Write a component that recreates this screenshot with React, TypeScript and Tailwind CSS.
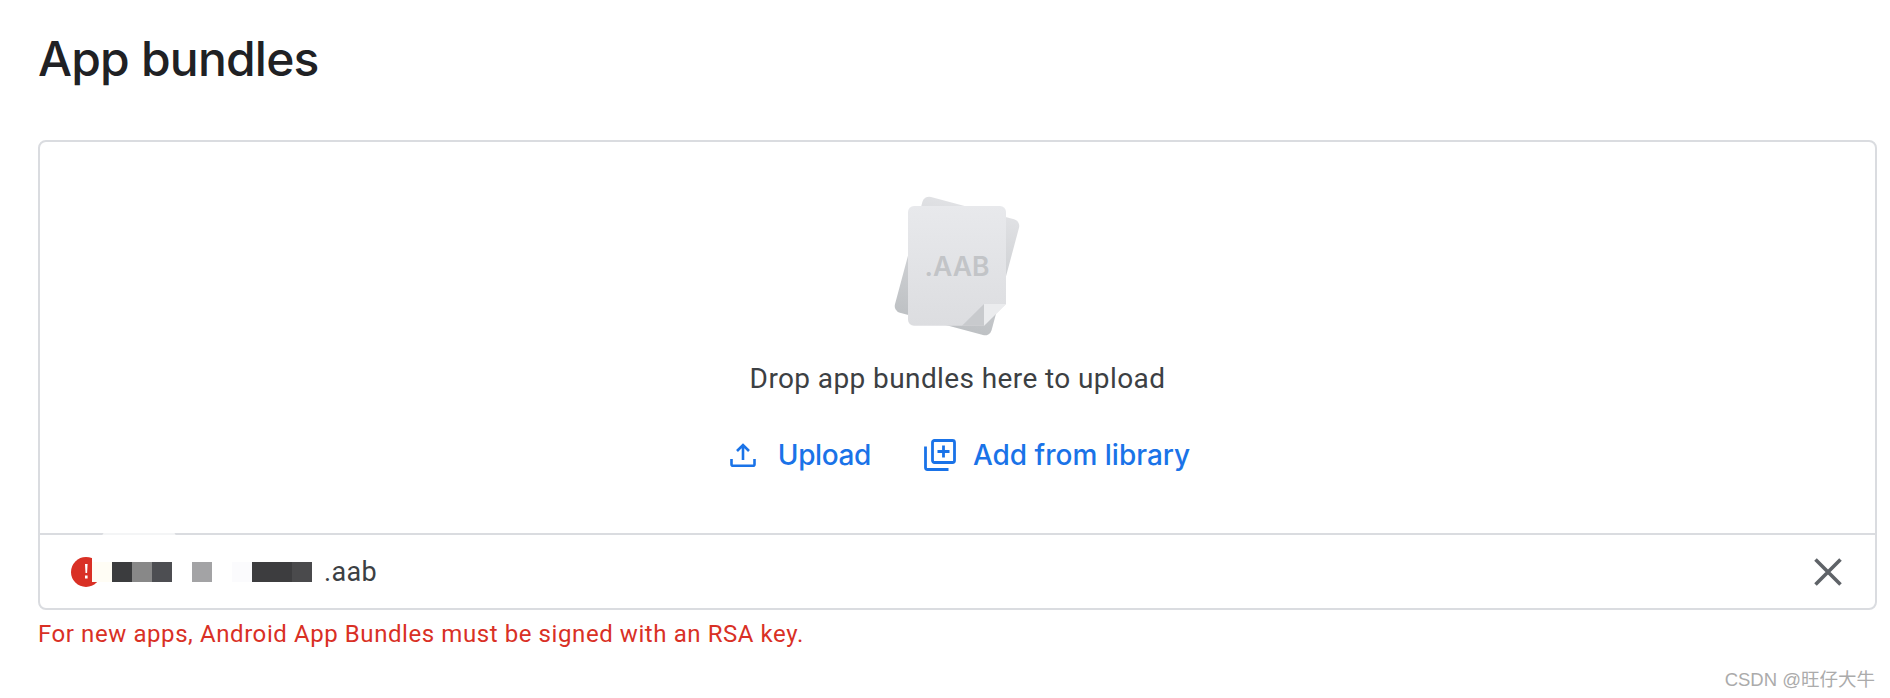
export default function App() {
  return (
    <div className="w-[1890px] h-[698px] bg-white overflow-hidden flex flex-col pl-[38px] pr-[11px] font-['Roboto','Noto_Sans_CJK_SC',sans-serif]">
      <h1 className="mt-[30px] h-[58px] leading-[58px] text-[48px] font-medium tracking-[-0.8px] text-[#202124] font-['Inter',sans-serif]">
        App bundles
      </h1>
      <div className="mt-[52px] w-[1839px] h-[470px] border-2 border-[#dadce0] rounded-[8px] flex flex-col">
        <div className="relative h-[393px] flex flex-col items-center border-b-2 border-[#dadce0]">
          <svg className="mt-[38px]" width="196" height="170" viewBox="0 0 196 170">
            <defs>
              <linearGradient id="back" x1="0" y1="0" x2="0" y2="1">
                <stop offset="0" stopColor="#e0e1e4" />
                <stop offset="1" stopColor="#bec1c4" />
              </linearGradient>
              <linearGradient id="front" x1="0" y1="0" x2="0" y2="1">
                <stop offset="0" stopColor="#e8e9ec" />
                <stop offset="1" stopColor="#dcdde0" />
              </linearGradient>
            </defs>
            <rect x="47" y="26" width="100" height="120" rx="7" fill="url(#back)" transform="rotate(15 97 86)" />
            <path d="M54 26h86a6 6 0 0 1 6 6v92l-22 21.7H54a6 6 0 0 1-6-6V32a6 6 0 0 1 6-6z" fill="url(#front)" />
            <path d="M102 145.7L124 124v21.7z" fill="#c8cacd" />
            <path d="M124 124h22l-22 21.7z" fill="#ebecee" />
            <text x="97" y="96" textAnchor="middle" fontFamily="Inter, sans-serif" fontSize="26.5" fontWeight="600" fill="#c2c4c7">.AAB</text>
          </svg>
          <p className="mt-[12px] h-[34px] leading-[34px] text-[28px] tracking-[0.4px] text-[#3c4043]">
            Drop app bundles here to upload
          </p>
          <div className="mt-[38px] ml-[5px] flex items-center text-[#1a73e8] text-[28px] font-medium font-['Inter',sans-serif]">
            <svg width="26" height="26" viewBox="0 0 26 26" fill="none" stroke="#1a73e8" strokeWidth="2.6">
              <path d="M13 18V3.5M7 9l6-6 6 6M1.5 17v5.2a1.5 1.5 0 0 0 1.5 1.5h20a1.5 1.5 0 0 0 1.5-1.5V17" />
            </svg>
            <span className="ml-[22px] tracking-[-0.4px]">Upload</span>
            <svg className="ml-[53px]" width="32" height="32" viewBox="0 0 32 32" fill="none" stroke="#1a73e8" strokeWidth="2.8">
              <rect x="8.5" y="1.5" width="22" height="22" rx="2" />
              <path d="M19.5 6.5v12M13.5 12.5h12M1.5 7.5v21a2 2 0 0 0 2 2h21" />
            </svg>
            <span className="ml-[17px]">Add from library</span>
          </div>
          <div className="absolute left-[62px] bottom-[-4px] w-[74px] h-[6px] rounded-t-[8px] bg-white/70" />
        </div>
        <div className="flex-1 flex items-center pl-[30px] pr-[32px]">
          <svg width="32" height="32" viewBox="0 0 32 32">
            <circle cx="16" cy="16" r="15" fill="#d93025" />
            <path d="M15 8h2.6l-.5 9h-1.6z M15 19.5h2.6v3H15z" fill="#fff" />
            <path d="M22 0h10v25h-6l-4-5z" fill="#fff" />
          </svg>
          <div className="ml-[-10px] flex h-[20px]">
            <div className="w-[20px] bg-[#fffdf5]" />
            <div className="w-[20px] bg-[#3b3c3e]" />
            <div className="w-[20px] bg-[#888888]" />
            <div className="w-[20px] bg-[#4d4e52]" />
            <div className="w-[20px]" />
            <div className="w-[20px] bg-[#a3a3a5]" />
            <div className="w-[20px]" />
            <div className="w-[20px] bg-[#fbfbfd]" />
            <div className="w-[40px] bg-[#3d3d3f]" />
            <div className="w-[20px] bg-[#4a4a4c]" />
          </div>
          <span className="ml-[12px] text-[27px] leading-[32px] tracking-[0.3px] text-[#3c4043]">.aab</span>
          <svg className="ml-auto" width="30" height="30" viewBox="0 0 30 30" stroke="#5f6368" strokeWidth="3.6" fill="none">
            <path d="M2.5 2.5l25 25M27.5 2.5l-25 25" />
          </svg>
        </div>
      </div>
      <p className="mt-[10px] h-[28px] leading-[28px] text-[24px] tracking-[0.58px] text-[#d93025]">
        For new apps, Android App Bundles must be signed with an RSA key.
      </p>
      <div className="mt-[20px] pr-[4px] text-right text-[18.5px] leading-[24px] text-[#ababab] font-['Liberation_Sans','Noto_Sans_CJK_SC',sans-serif]">
        CSDN @旺仔大牛
      </div>
    </div>
  );
}
